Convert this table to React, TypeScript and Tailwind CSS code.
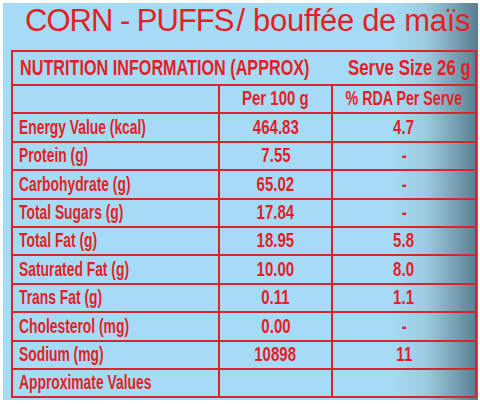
const rows = [
  { name: "Energy Value (kcal)", per100: "464.83", rda: "4.7" },
  { name: "Protein (g)", per100: "7.55", rda: "-" },
  { name: "Carbohydrate (g)", per100: "65.02", rda: "-" },
  { name: "Total Sugars (g)", per100: "17.84", rda: "-" },
  { name: "Total Fat (g)", per100: "18.95", rda: "5.8" },
  { name: "Saturated Fat (g)", per100: "10.00", rda: "8.0" },
  { name: "Trans Fat (g)", per100: "0.11", rda: "1.1" },
  { name: "Cholesterol (mg)", per100: "0.00", rda: "-" },
  { name: "Sodium (mg)", per100: "10898", rda: "11" },
  { name: "Approximate Values", per100: "", rda: "" },
];

const cell = "border-2 border-[#d8262d] h-[28.4px] p-0 whitespace-nowrap";

// condensed look: Arial bold squeezed sideways
const Mid = ({ children, wide }: { children: React.ReactNode; wide?: boolean }) => (
  <div className="flex justify-center">
    <span className={`inline-block shrink-0 origin-center ${wide ? "scale-x-[0.77]" : "scale-x-[0.73]"}`}>{children}</span>
  </div>
);

const App = () => {
  return (
    <div className="w-[480px] h-[404px] bg-white pt-[3px] pl-[3px]">
      <div className="w-[475px] h-[397px] bg-[linear-gradient(to_right,#a6dbf5_0%,#a6dbf5_82%,#9ccbe0_89%,#7aa2b4_95%,#587d8f_100%)] text-[#e41f27]">
        <div className="h-[47px] pl-[22px] pt-[2px] font-['Liberation_Sans',Arial,sans-serif] text-[31px] leading-[31px] whitespace-nowrap">
          <span className="tracking-[-1px]">CORN - PUFFS</span>
          <span className="ml-[3px] tracking-[-0.3px]">/ bouffée de maïs</span>
        </div>
        <table className="ml-[8px] w-[464px] border-collapse font-['Liberation_Sans',Arial,sans-serif] font-bold table-fixed">
          <colgroup>
            <col className="w-[207px]" />
            <col className="w-[113px]" />
            <col className="w-[144px]" />
          </colgroup>
          <tbody>
            <tr>
              <td colSpan={3} className="border-2 border-[#d8262d] h-[34px] p-0 whitespace-nowrap">
                <div className="flex items-center pl-[7px] pr-[4px] text-[22.5px] leading-none">
                  <div className="flex-1 min-w-0">
                    <span className="inline-block scale-x-[0.72] origin-left">NUTRITION INFORMATION (APPROX)</span>
                  </div>
                  <div className="flex justify-end w-[150px]">
                    <span className="inline-block shrink-0 scale-x-[0.75] origin-right">Serve Size 26 g</span>
                  </div>
                </div>
              </td>
            </tr>
            <tr className="text-[19.5px] leading-none">
              <td className={cell}></td>
              <td className={cell}>
                <Mid wide>Per 100 g</Mid>
              </td>
              <td className={cell}>
                <Mid>% RDA Per Serve</Mid>
              </td>
            </tr>
            {rows.map((r) => (
              <tr key={r.name} className="text-[19.5px] leading-none">
                <td className={`${cell} pl-[6px]`}>
                  <span className="inline-block scale-x-[0.71] origin-left">{r.name}</span>
                </td>
                <td className={cell}>
                  <Mid wide>{r.per100}</Mid>
                </td>
                <td className={cell}>
                  <Mid wide>{r.rda}</Mid>
                </td>
              </tr>
            ))}
          </tbody>
        </table>
      </div>
    </div>
  );
};

export default App;
